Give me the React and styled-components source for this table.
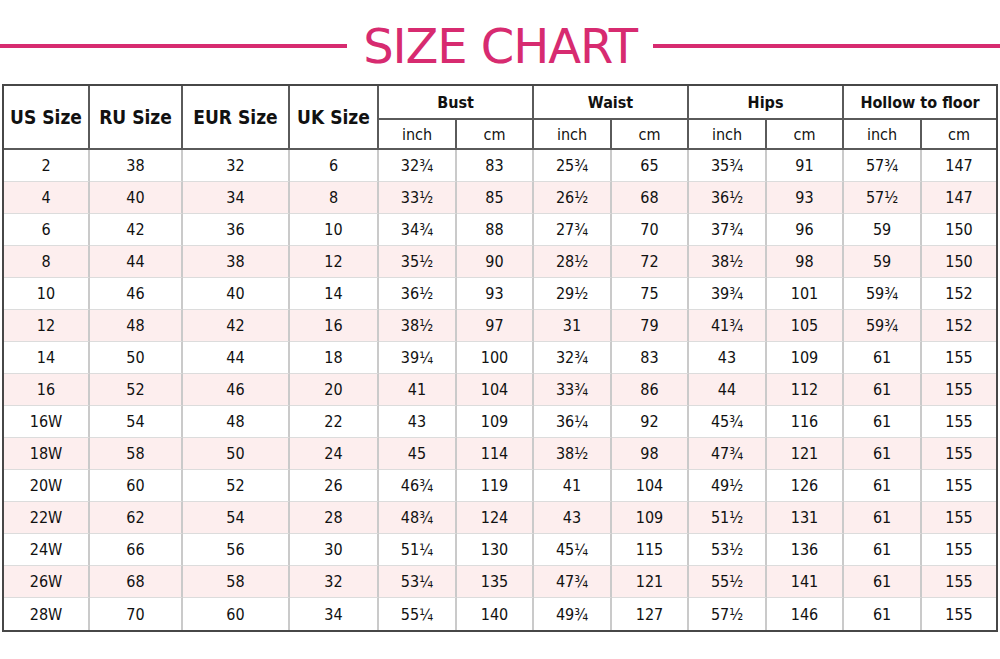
import styled, { createGlobalStyle } from "styled-components";

const GlobalStyle = createGlobalStyle`
    html, body {
        margin: 0;
        padding: 0;
        background: #ffffff;
    }
    body {
        font-family: "DejaVu Sans Condensed", "DejaVu Sans", sans-serif;
        font-stretch: condensed;
        color: #111;
    }
`;

const Page = styled.div`
    width: 1000px;
    height: 659px;
    padding: 0 2px;
    box-sizing: border-box;
`;

const TitleBar = styled.div`
    display: flex;
    align-items: center;
    gap: 16px;
    height: 84px;
    padding-top: 7px;
    box-sizing: border-box;
    margin: 0 -2px;
`;

const Line = styled.div`
    flex: 1;
    height: 4px;
    background: #d72b70;
`;

const Title = styled.h1`
    margin: 0;
    font-family: "DejaVu Sans", sans-serif;
    font-stretch: normal;
    font-weight: normal;
    font-size: 48px;
    letter-spacing: -1.1px;
    line-height: 1;
    color: #d72b70;
`;

const Table = styled.table`
    width: 996px;
    table-layout: fixed;
    border-collapse: separate;
    border-spacing: 0;
    border: 2px solid #474747;
    box-sizing: border-box;
`;

const Th = styled.th`
    box-sizing: border-box;
    padding: 0;
    font-weight: ${(p) => (p.$sub ? "normal" : "bold")};
    font-size: ${(p) => (p.$big ? "19px" : "16px")};
    height: ${(p) => (p.$sub ? "30px" : "34px")};
    text-align: center;
    border-right: 2px solid #5a5a5a;
    border-bottom: 2px solid #5a5a5a;
    &:last-child {
        border-right: none;
    }
`;

const Tr = styled.tr`
    background: ${(p) => (p.$pink ? "#fdeeee" : "#ffffff")};
    &:last-child td {
        border-bottom: none;
    }
`;

const Td = styled.td`
    box-sizing: border-box;
    padding: 0;
    height: 32px;
    font-size: 16px;
    text-align: center;
    border-right: 2px solid #cacaca;
    border-bottom: 1px solid #dcdcdc;
    &:last-child {
        border-right: none;
    }
`;

const widths = [86, 93, 107, 89, 78, 77, 78, 77, 78, 77, 78, 74];

const rows = [
    ["2", "38", "32", "6", "32¾", "83", "25¾", "65", "35¾", "91", "57¾", "147"],
    ["4", "40", "34", "8", "33½", "85", "26½", "68", "36½", "93", "57½", "147"],
    ["6", "42", "36", "10", "34¾", "88", "27¾", "70", "37¾", "96", "59", "150"],
    ["8", "44", "38", "12", "35½", "90", "28½", "72", "38½", "98", "59", "150"],
    ["10", "46", "40", "14", "36½", "93", "29½", "75", "39¾", "101", "59¾", "152"],
    ["12", "48", "42", "16", "38½", "97", "31", "79", "41¾", "105", "59¾", "152"],
    ["14", "50", "44", "18", "39¼", "100", "32¾", "83", "43", "109", "61", "155"],
    ["16", "52", "46", "20", "41", "104", "33¾", "86", "44", "112", "61", "155"],
    ["16W", "54", "48", "22", "43", "109", "36¼", "92", "45¾", "116", "61", "155"],
    ["18W", "58", "50", "24", "45", "114", "38½", "98", "47¾", "121", "61", "155"],
    ["20W", "60", "52", "26", "46¾", "119", "41", "104", "49½", "126", "61", "155"],
    ["22W", "62", "54", "28", "48¾", "124", "43", "109", "51½", "131", "61", "155"],
    ["24W", "66", "56", "30", "51¼", "130", "45¼", "115", "53½", "136", "61", "155"],
    ["26W", "68", "58", "32", "53¼", "135", "47¾", "121", "55½", "141", "61", "155"],
    ["28W", "70", "60", "34", "55¼", "140", "49¾", "127", "57½", "146", "61", "155"],
];

const groups = ["Bust", "Waist", "Hips", "Hollow to floor"];

function App() {
    return (
        <Page>
            <GlobalStyle />
            <TitleBar>
                <Line />
                <Title>SIZE CHART</Title>
                <Line />
            </TitleBar>
            <Table>
                <colgroup>
                    {widths.map((w, i) => (
                        <col key={i} style={{ width: w }} />
                    ))}
                </colgroup>
                <thead>
                    <tr>
                        <Th $big rowSpan={2}>US Size</Th>
                        <Th $big rowSpan={2}>RU Size</Th>
                        <Th $big rowSpan={2}>EUR Size</Th>
                        <Th $big rowSpan={2}>UK Size</Th>
                        {groups.map((g) => (
                            <Th key={g} colSpan={2}>{g}</Th>
                        ))}
                    </tr>
                    <tr>
                        {groups.map((g) => [
                            <Th $sub key={g + "i"}>inch</Th>,
                            <Th $sub key={g + "c"}>cm</Th>,
                        ])}
                    </tr>
                </thead>
                <tbody>
                    {rows.map((r, i) => (
                        <Tr key={i} $pink={i % 2 === 1}>
                            {r.map((v, j) => (
                                <Td key={j}>{v}</Td>
                            ))}
                        </Tr>
                    ))}
                </tbody>
            </Table>
        </Page>
    );
}

export default App;
